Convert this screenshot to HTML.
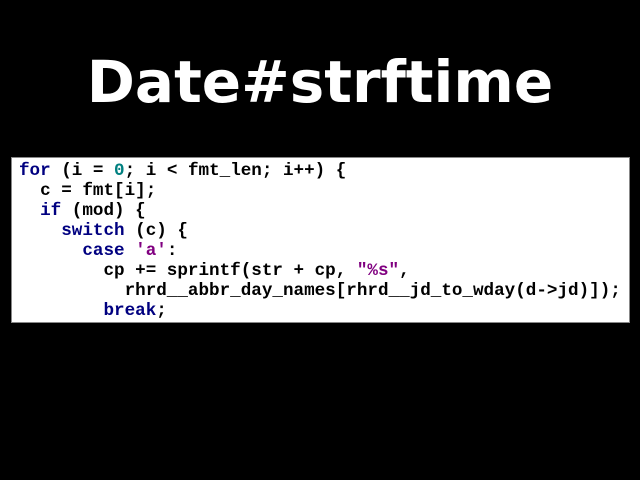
<!DOCTYPE html>
<html><head><style>
html,body{margin:0;padding:0;background:#000;width:640px;height:480px;overflow:hidden;position:relative}
h1{position:absolute;left:0;width:640px;top:44px;margin:0;text-align:center;font:bold 58px "DejaVu Sans",sans-serif;color:#fff;line-height:76px}
.box{position:absolute;left:11px;top:157px;width:617px;height:164px;background:#fff;border:1px solid #888}
pre{margin:0;position:absolute;left:7px;top:3px;font:bold 17.6px/20px "Liberation Mono",monospace;color:#000}
.k{color:#000080}.n{color:#008080}.s{color:#800080}
</style></head><body>
<h1>Date#strftime</h1>
<div class="box"><pre><span class="k">for</span> (i = <span class="n">0</span>; i &lt; fmt_len; i++) {
  c = fmt[i];
  <span class="k">if</span> (mod) {
    <span class="k">switch</span> (c) {
      <span class="k">case</span> <span class="s">'a'</span>:
        cp += sprintf(str + cp, <span class="s">"%s"</span>,
          rhrd__abbr_day_names[rhrd__jd_to_wday(d-&gt;jd)]);
        <span class="k">break</span>;</pre></div>
</body></html>
